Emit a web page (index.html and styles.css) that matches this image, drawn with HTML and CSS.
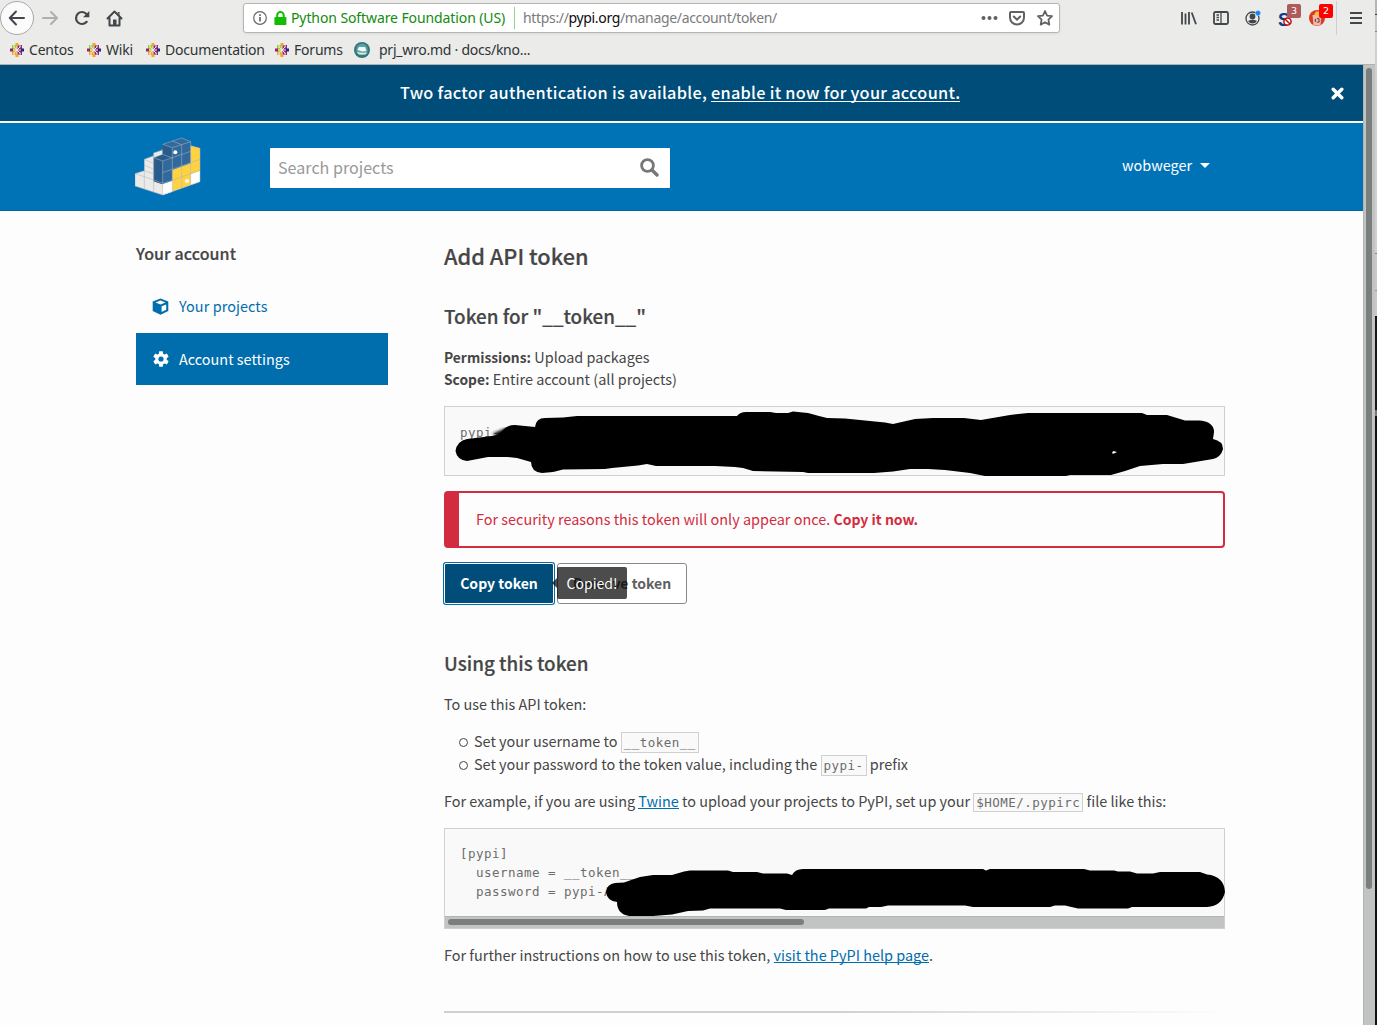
FILE: index.html
```html
<!DOCTYPE html>
<html lang="en">
<head>
<meta charset="utf-8">
<title>Add API token · PyPI</title>
<link rel="stylesheet" href="styles.css">
</head>
<body>
<svg class="defs" width="0" height="0" aria-hidden="true">
  <symbol id="centos" viewBox="0 0 14 14">
    <path fill="#9ccd2a" d="M2 2h4.500v4.500H2z"/><path fill="#932279" d="M7.500 2H12v4.500H7.500z"/>
    <path fill="#efa724" d="M2 7.500h4.500V12H2z"/><path fill="#932279" d="M7.500 7.500H12V12H7.500z"/>
    <path fill="#efa724" d="M5.500 0h3v3h-3zM5.500 11h3v3h-3z"/>
    <path fill="#262577" d="M11 5.500h3v3h-3z"/><path fill="#932279" d="M0 5.500h3v3H0z"/>
    <path stroke="#ebebe9" stroke-width="1" d="M3.500 3.500l7 7M10.500 3.500l-7 7M4 0v4.500M10 0v4.500M4 9.500V14M10 9.500V14"/>
  </symbol>
</svg>
<div class="window">
  <div class="chrome">
    <div class="toolbar">
      <div class="nav">
        <span class="back"><svg width="18" height="16" viewBox="0 0 18 16"><path d="M16 8H2M8 1.500L1.800 8 8 14.500" fill="none" stroke="#42474b" stroke-width="2" stroke-linecap="round" stroke-linejoin="round"/></svg></span>
        <svg width="16" height="16" viewBox="0 0 16 16"><path d="M1 8h13M9 2l6 6-6 6" fill="none" stroke="#aeafaf" stroke-width="2" stroke-linecap="round" stroke-linejoin="round"/></svg>
        <svg width="16" height="16" viewBox="0 0 16 16"><path d="M12.700 11.800A6 6 0 1 1 12.500 4" fill="none" stroke="#42474b" stroke-width="2.200" stroke-linecap="round"/><path d="M15.300 1v6.200H9z" fill="#42474b"/></svg>
        <svg width="17" height="17" viewBox="0 0 17 17"><path d="M1.500 8.500l7-7 7 7M3.500 8v7.500h10V8" fill="none" stroke="#42474b" stroke-width="2" stroke-linecap="round" stroke-linejoin="round"/><path d="M7 15.500V9.500h3.500v6zM11.500 2h2v4z" fill="#42474b"/></svg>
      </div>
      <div class="urlbar">
        <svg width="14" height="14" viewBox="0 0 14 14"><circle cx="7" cy="7" r="6.300" fill="none" stroke="#666" stroke-width="1.200"/><path d="M7 6v4.500M7 3.300v1.600" stroke="#666" stroke-width="1.700"/></svg>
        <svg class="lock" width="13" height="14" viewBox="0 0 13 14"><path d="M3.200 7V4.200a3.200 3.200 0 0 1 6.500 0V7" fill="none" stroke="#12bc00" stroke-width="2"/><rect x=".4" y="6" width="12" height="8" rx="1" fill="#12bc00"/></svg>
        <span class="identity">Python Software Foundation (US)</span>
        <span class="url">https://<b>pypi.org</b>/manage/account/token/</span>
        <svg class="dots" width="17" height="4" viewBox="0 0 17 4"><g fill="#5f6163"><circle cx="2.500" cy="2" r="2"/><circle cx="8.500" cy="2" r="2"/><circle cx="14.500" cy="2" r="2"/></g></svg>
        <svg width="16" height="15" viewBox="0 0 16 15"><path d="M2 1h12q1 0 1 1v4.500a7 7 0 0 1-14 0V2q0-1 1-1z" fill="none" stroke="#5f6163" stroke-width="2"/><path d="M4.800 5.500L8 8.700l3.200-3.200" fill="none" stroke="#5f6163" stroke-width="2" stroke-linecap="round"/></svg>
        <svg width="16" height="16" viewBox="0 0 16 16"><path d="M8 1l2.100 4.600 4.900.6-3.600 3.400.9 5L8 12.200l-4.300 2.400.9-5L1 6.200l4.900-.6z" fill="none" stroke="#5f6163" stroke-width="1.800" stroke-linejoin="round"/></svg>
      </div>
      <div class="tools">
        <svg width="16" height="14" viewBox="0 0 16 14"><path d="M1 1v12.500M4.500 2.500v11M8 1v12.500M10.700 1.500L15 13.200" stroke="#42474b" stroke-width="1.800" fill="none"/></svg>
        <svg width="16" height="14" viewBox="0 0 16 14"><rect x="1" y="1" width="14" height="12" rx="1.500" fill="none" stroke="#42474b" stroke-width="1.800"/><path d="M8 1v12M3.500 4h2.500M3.500 6.500h2.500M3.500 9h2.500" stroke="#42474b" stroke-width="1.300"/></svg>
        <svg width="17" height="16" viewBox="0 0 17 16"><circle cx="7.500" cy="8.500" r="6.500" fill="none" stroke="#42474b" stroke-width="1.300"/><circle cx="7.500" cy="6.500" r="2.900" fill="#42474b"/><path d="M3 11q4.500-2.500 9 0-1.500 2.500-4.500 2.500T3 11z" fill="#42474b"/><circle cx="13" cy="3" r="2.600" fill="#0a84ff" stroke="#ebebe9" stroke-width=".4"/></svg>
        <span class="ext"><span class="s">S</span><svg width="9" height="9" viewBox="0 0 9 9"><circle cx="4.500" cy="4.500" r="3.600" fill="#fff" stroke="#c00d0d" stroke-width="1.500"/><path d="M2 2l5 5" stroke="#c00d0d" stroke-width="1.500"/></svg><i class="badge dim">3</i></span>
        <span class="ext"><svg class="bin" width="16" height="16" viewBox="0 0 16 16"><circle cx="8" cy="8" r="8" fill="#d93a20"/><path d="M3.500 5h9l-1 10.500h-7z" fill="#f0b9aa"/><path d="M5 5l2-3.500h3l1 3.500z" fill="#f5bd2c"/><circle cx="8.300" cy="10.300" r="2" fill="none" stroke="#6b4b52" stroke-width="1.300" stroke-dasharray="2.800 1.300"/></svg><i class="badge">2</i></span>
        <span class="sep"></span>
        <svg width="12" height="12" viewBox="0 0 12 12"><path d="M0 1h12M0 6h12M0 11h12" stroke="#42474b" stroke-width="2"/></svg>
      </div>
    </div>
    <div class="bookmarks">
      <span class="bm w1"><svg width="14" height="14"><use href="#centos"/></svg>Centos</span>
      <span class="bm w2"><svg width="14" height="14"><use href="#centos"/></svg>Wiki</span>
      <span class="bm w3"><svg width="14" height="14"><use href="#centos"/></svg>Documentation</span>
      <span class="bm w4"><svg width="14" height="14"><use href="#centos"/></svg>Forums</span>
      <span class="bm w5"><svg width="16" height="16" viewBox="0 0 16 16"><circle cx="8" cy="8" r="8" fill="#36777b"/><circle cx="8" cy="7.500" r="5.700" fill="#5da3a5"/><path d="M5 5h6l1.500 4-4 .5-5-1.500z" fill="#f5faf9"/><path d="M2.500 10q5 1 11 .5l-2 2H5z" fill="#d9e8e5"/></svg>prj_wro.md · docs/kno...</span>
    </div>
  </div>

  <div class="viewport">
    <div class="page">
      <div class="notice">
        <p>Two factor authentication is available, <a>enable it now for your account.</a></p>
        <svg class="close" width="13" height="13" viewBox="0 0 13 13"><path d="M2.200 2.200l8.600 8.600M10.800 2.200l-8.600 8.600" stroke="#fff" stroke-width="3.400" stroke-linecap="round"/></svg>
      </div>
      <header class="site-header">
        <svg class="logo" width="66" height="59" viewBox="45 36 198 177">
          <path fill="#eceae7" d="M45 146l28-9v-34l28-10V84l28-9 83-12 28 7v100l-112 40-83-27z"/>
          <path fill="#fff" d="M128 178l29-10v32l-29 10zM212 147l28-10v33l-28 10z"/>
          <path fill="#ffd242" d="M157 134l55-20V62l28 8v67l-28 10v33l-55 19z"/>
          <path fill="#30699b" d="M101 98l27-10V58l57-19 27 11v65l-55 20v33l-29 10-27-9z"/>
          <path fill="#2a5c8b" d="M128 58l29 10v32l-29 8v70l-27-9V98l27-9z"/>
          <path fill="#fff" d="M128 178l29-10v32l-29 10z"/>
          <path fill="#ffd242" d="M129 144l28-10v34l-1 0z" opacity="0"/>
          <path fill="none" stroke="#a9b4c4" stroke-width="1.600" d="M45 146l28 9 28 10 27 10 29-9 55-20 28-10M73 137v56M45 146l28-9 28 9M73 103l28 12M73 103l28-11M101 84v118M101 84l27-10M73 120l28 13M101 98l27 10 84-29M101 98l27-10 29 11M128 143l112-40M128 108v102M128 58l29 10 55-18M128 58l57-19 27 11M157 48l28 11M157 68v130M185 59v130M212 50v129M212 62l28 8v100M45 146v37l83 27 112-40"/>
          <circle cx="166" cy="82" r="6" fill="#fff"/><circle cx="201" cy="168" r="6" fill="#fff"/>
        </svg>
        <div class="search"><span>Search projects</span><svg width="19" height="19" viewBox="0 0 19 19"><circle cx="7.500" cy="7.500" r="5.900" fill="none" stroke="#777" stroke-width="2.800"/><path d="M12 12l5 5" stroke="#777" stroke-width="3.400" stroke-linecap="round"/></svg></div>
        <div class="user">wobweger<i class="caret"></i></div>
      </header>
      <div class="columns">
        <aside>
          <h3>Your account</h3>
          <a class="side"><svg width="17" height="17" viewBox="0 0 17 17"><path fill="#006dad" d="M8.500.5l7.800 2.900v9.700l-7.800 3.600-7.800-3.600V3.400z"/><path fill="#fdfdfd" d="M3.500 4.500l5-1.900 5 1.900-5 2zM9.600 8.300l4.600-1.900v5.300l-4.600 2.200z"/></svg>Your projects</a>
          <a class="side active"><svg width="16" height="16" viewBox="-8 -8 16 16"><g fill="#fff"><circle r="5.800"/><rect x="-2" y="-7.800" width="4" height="15.600" rx=".7"/><rect x="-2" y="-7.800" width="4" height="15.600" rx=".7" transform="rotate(60)"/><rect x="-2" y="-7.800" width="4" height="15.600" rx=".7" transform="rotate(120)"/></g><circle r="2.600" fill="#006dad"/></svg>Account settings</a>
        </aside>
        <main>
          <h1>Add API token</h1>
          <h2 class="for">Token for "__token__"</h2>
          <p class="perm"><b>Permissions:</b> Upload packages<br><b>Scope:</b> Entire account (all projects)</p>
          <div class="codebox token"><code>pypi-</code>
            <svg class="ink" viewBox="444 406 781 72" width="781" height="72"><defs><filter id="soft"><feGaussianBlur stdDeviation="1.500"/></filter></defs><path filter="url(#soft)" d="M492 434l14-6 8 4-8 6z"/><path d="M455.500 451Q457 441 467 439L492 436Q501 434 503 430 507 425 515 425L535 427Q536 418 545 418L563 417.500 577 416H737Q740 412 746 412H770L776 413 788 413 793 411.500 808 413 819 416 827 418 845 418.500 870 421 885 422.500 893 424 915 419 933 418 964 418 981 420 1010 415 1028 413H1142L1147 415H1167L1185 420.500H1200Q1214 422 1214 432L1213 439Q1223 441 1223 449 1221 457 1213 459L1183 464 1163 464 1140 466 1125 471 1111 475H1070L1066 476H985L970 473 945 470 928 469 910 469 893 471.500 874 473H808L803 472 753 471 743 468 735 467 715 466H656L647 464 638 465.500 612 468 605 469 563 469.500 553 472 542 473Q531 472 531 462L517 458 507 457H488L467 461Q457 460 455.500 451z"/><path fill="#fff" d="M1113 451l4 1-3 1.500h-2z"/></svg>
          </div>
          <div class="alert">For security reasons this token will only appear once. <b>Copy it now.</b></div>
          <div class="buttons">
            <span class="btn primary">Copy token<span class="tip">Copied!</span></span>
            <span class="btn">Remove token</span>
          </div>
          <h2 class="using">Using this token</h2>
          <p class="intro">To use this API token:</p>
          <ul>
            <li>Set your username to <code>__token__</code></li>
            <li>Set your password to the token value, including the <code>pypi-</code> prefix</li>
          </ul>
          <p class="example">For example, if you are using <a>Twine</a> to upload your projects to PyPI, set up your <code>$HOME/.pypirc</code> file like this:</p>
          <div class="codebox config"><pre>[pypi]
  username = __token__
  password = pypi-A</pre>
            <div class="hbar"><i></i></div>
            <svg class="ink" viewBox="444 828 781 100" width="781" height="100"><path d="M606 892Q607 884 615 883L624 882.500 640 877 653 875H672L684 871.500 690 870.500H728L733 872H757L763 873.500H787L792 875Q795 869 803 869H983L986 870.500 990 869H1084L1090 870.500H1114L1118 871.500H1130L1137 873.500H1153L1160 872H1200L1207 874.500Q1224 876 1225 892 1222 906 1207 907H1132L1128 908.500H1078L1065 905.500H1055L1050 907H973L965 905.500H888L881 907H869L866 908.500H829L825 910H786L780 908.500H710L703 910.500 688 911 672 914.500 653 916H629Q617 914 617 902 607 901 606 892z"/></svg>
          </div>
          <p class="help">For further instructions on how to use this token, <a>visit the PyPI help page</a>.</p>
          <div class="rule"></div>
        </main>
      </div>
    </div>
    <div class="vbar"><i></i></div>
  </div>
</div>
<div class="behind"></div>
</body>
</html>
```
FILE: styles.css
```css
* { box-sizing: border-box; }
body {
  margin: 0; height: 1025px; display: flex; overflow: hidden; background: #fdfdfd;
  font: 14.45px/22px "Noto Sans CJK SC", "Noto Sans", sans-serif; color: #464646;
}
svg { display: block; flex: none; }
.defs { position: absolute; }
h1, h2, h3, p, ul, pre { margin: 0; }
b { font-weight: 600; font-size: 14px; }
.perm b { font-size: 13.8px; }
.window { width: 1375px; display: flex; flex-direction: column; }
.behind {
  width: 2px;
  background: linear-gradient(#b5b5b5 0 14px, #333 14px 15px, #c5c5c5 15px 31px, #888 31px 32px, #d0d0d0 32px 253px, #888 253px 254px, #c8c8c8 254px 290px, #999 290px 291px, #c8c8c8 291px 316px, #161616 316px 410px, #777 410px 416px, #111 416px);
}

/* browser chrome */
.chrome {
  height: 65px; background: #ebebe9; border-bottom: 1px solid #b1b1ae;
  font-family: "Noto Sans", sans-serif; color: #2e3436; font-size: 14px;
}
.toolbar { height: 36px; display: flex; align-items: center; }
.nav { width: 243px; display: flex; align-items: center; gap: 16px; }
.nav > svg:nth-of-type(1) { margin-left: -8px; }
.back {
  width: 34px; height: 34px; border: 1px solid #a9a9a7; border-radius: 50%; background: #fbfbfb;
  display: flex; align-items: center; justify-content: center;
}
.urlbar {
  width: 817px; height: 30px; background: #fff; border: 1px solid #b5b5b3; border-radius: 3px;
  box-shadow: 0 1px 3px #0001; display: flex; align-items: center; padding: 0 6px 0 9px;
}
.lock { margin: 0 4px 0 7px; }
.identity { color: #118c0d; width: 224px; height: 22px; border-right: 1px solid #8cd88a; white-space: nowrap; letter-spacing: -.1px; }
.url { color: #7b7b7b; padding-left: 8px; flex: 1; letter-spacing: -.34px; }
.url b { color: #0c0c0d; font-weight: 400; }
.dots { margin-right: 11px; }
.urlbar svg:last-child { margin-left: 12px; }
.tools { margin-left: 121px; display: flex; align-items: center; gap: 16px; }
.ext { position: relative; width: 16px; height: 16px; }
.ext .s { font: bold 18px/16px "Liberation Sans", sans-serif; color: #123a86; }
.ext svg { position: absolute; left: 5px; top: 7px; }
.ext .bin { left: -1px; top: 0; }
.badge {
  position: absolute; left: 9px; top: -6px; width: 14px; height: 14px; border-radius: 2px;
  background: #f00; color: #fff; font: 9.5px/13px "DejaVu Sans", sans-serif; text-align: center;
}
.badge.dim { background: #ad5b5b; }
.sep { width: 1px; height: 34px; background: #cfcfcd; margin: 0 -3px 0 -6px; }

.bookmarks { display: flex; height: 28px; align-items: center; padding-left: 10px; letter-spacing: -.2px; }
.bm { display: flex; align-items: center; gap: 5px; white-space: nowrap; }
.w1 { width: 77px; } .w2 { width: 59px; } .w3 { width: 129px; } .w4 { width: 79px; }
.w5 { gap: 9px; letter-spacing: -.25px; }

/* viewport */
.viewport { flex: 1; display: flex; min-height: 0; }
.page { width: 1363px; }
.vbar { width: 12px; background: #c1c4c3; border-left: 1px solid #b0b5b4; padding: 3px 3px 0 2px; }
.vbar i { display: block; width: 6px; height: 821px; border-radius: 3px; background: #7a7e7d; }
.notice {
  height: 58px; background: #004d7a; border-bottom: 2px solid #fff; color: #fff;
  display: flex; align-items: center; justify-content: space-between; padding: 0 19px 2px 400px;
  font-size: 16.3px; font-weight: 500; letter-spacing: .28px;
}
.notice svg { margin-top: 2px; }
.notice a { display: inline-block; height: 21px; border-bottom: 1px solid #fff; }
.site-header {
  height: 88px; background: #0073b7; border-bottom: 1px solid #0067a3; padding-left: 135px;
  display: flex; align-items: center; color: #fff;
}
.search {
  margin: 2px 0 0 69px; width: 400px; height: 40px; background: #fff; border-radius: 1px; color: #999;
  display: flex; align-items: center; justify-content: space-between; padding: 0 11px 0 8px; font-size: 16.1px;
}
.search span { padding-bottom: 2px; }
.user { margin-left: 452px; display: flex; align-items: center; gap: 8px; height: 26px; margin-bottom: 3px; }
.caret { border: 5px solid transparent; border-top-color: #fff; border-bottom: 0; }

.columns { display: flex; padding-left: 136px; gap: 56px; }
aside { width: 252px; padding-top: 31px; }
h3 { font-size: 16px; line-height: 22px; font-weight: 500; margin-bottom: 16px; letter-spacing: .1px; }
h1, h2, h3 { -webkit-text-stroke: .2px #464646; }
.side { display: flex; height: 53px; align-items: center; gap: 9px; padding-left: 17px; color: #006dad; }
.side:not(.active) { padding: 0 0 1px 16px; gap: 10px; letter-spacing: .06px; }
.side.active { height: 52px; background: #006dad; color: #fff; gap: 10px; }
main { width: 781px; padding-top: 29px; white-space: nowrap; }
h1 { font-size: 21.75px; line-height: 32px; font-weight: 500; margin-bottom: 29px; }
h2 { font-size: 18.85px; line-height: 30px; font-weight: 500; }
.perm { margin: 15px 0 16px; }
.codebox { position: relative; border: 1px solid #d0d0d0; background: #f9f9f9; }
code, pre { font: 12.5px/19px "DejaVu Sans Mono", monospace; letter-spacing: .475px; color: #6c6c6c; }
.token { height: 70px; padding: 16px 15px; }
.token code { display: block; }
.ink { position: absolute; left: -1px; top: -1px; }
.alert {
  margin: 15px 0 14px; height: 57px; border: 2px solid #d32c40; border-left-width: 15px; border-radius: 4px;
  padding-left: 17px; line-height: 52px; color: #d32c40;
}
.buttons { display: flex; gap: 3px; height: 43px; align-items: center; }
.btn {
  position: relative; border: 1px solid #888; border-radius: 3px; height: 41px; width: 130px;
  line-height: 39px; text-align: center; font-size: 14px; font-weight: 600; color: #606060; background: #fff;
}
.btn.primary {
  z-index: 1; width: 110px; color: #fff; background: #004d7a; border-color: #fff; border-radius: 2px;
  box-shadow: 0 0 0 1px #006dad;
}
.tip {
  position: absolute; left: 112px; top: 3px; width: 70px; height: 32px; line-height: 32px; border-radius: 2px;
  background: #000000b3; font-weight: 400; color: #fff; text-align: center;
}
.tip::before { content: ""; position: absolute; left: -5px; top: 11px; border: 5px solid transparent; border-right-color: #000000b3; border-left: 0; }
.using { margin: 43px 0 15px; }
ul { list-style: none; padding-left: 15px; margin: 15px 0 14px; }
li { height: 23px; line-height: 22px; display: flex; align-items: center; white-space: pre; padding-bottom: 1px; }
li::before { content: ""; width: 7px; height: 7px; border: 1px solid #464646; border-radius: 50%; margin: 2px 8px 0 0; flex: none; }
li::before { margin-right: 6px; }
p code, li code { border: 1px solid #d0d0d0; background: #f9f9f9; padding: 1px 2px; }
li code { height: 21px; line-height: 17px; margin-top: 2px; }
.example { height: 22px; letter-spacing: -.01px; }
main a { display: inline-block; height: 19px; color: #006dad; border-bottom: 1px solid #006dad; }
.config { height: 101px; margin: 16px 0 15px; padding: 15px 15px 0; }
.hbar { margin: 15px -15px 0; height: 12px; background: #c1c4c3; border-top: 1px solid #b0b5b4; padding: 2px 3px; }
.hbar i { display: block; width: 356px; height: 6px; border-radius: 3px; background: #7a7e7d; }
.rule { margin-top: 45px; height: 2px; background: linear-gradient(90deg, #d0d0d0 50%, #fdfdfd); }
```
